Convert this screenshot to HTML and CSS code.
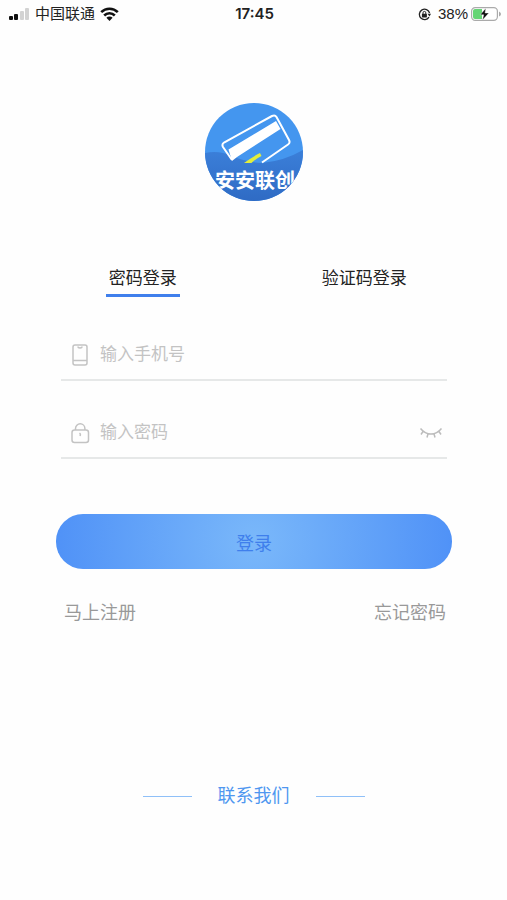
FILE: index.html
```html
<!DOCTYPE html>
<html lang="zh-CN">
<head>
<meta charset="utf-8">
<meta name="viewport" content="width=device-width, initial-scale=1">
<title>登录</title>
<link rel="stylesheet" href="styles.css">
</head>
<body>
<header class="status">
  <div class="status-side">
    <svg width="22" height="12" viewBox="0 0 22 12" aria-hidden="true">
      <rect x="1" y="8" width="4" height="4" rx="1" fill="#111"/>
      <rect x="6" y="6" width="4" height="6" rx="1" fill="#111"/>
      <rect x="12" y="3" width="4" height="9" rx="1" fill="#d2d2d2"/>
      <rect x="17" y="0" width="4" height="12" rx="1" fill="#d2d2d2"/>
    </svg>
    <span class="carrier">中国联通</span>
    <svg width="19" height="14" viewBox="0 0 19 14" aria-hidden="true">
      <g fill="none" stroke="#111" stroke-width="2.6">
        <path d="M1.2 5.2a11.8 11.8 0 0 1 16.6 0"/>
        <path d="M4.2 8.5a7.5 7.5 0 0 1 10.6 0"/>
      </g>
      <path d="M6.4 10.8a4.4 4.4 0 0 1 6.2 0L9.5 14z" fill="#111"/>
    </svg>
  </div>
  <time class="clock">17:45</time>
  <div class="status-side status-right">
    <svg width="13" height="13" viewBox="0 0 13 13" aria-hidden="true">
      <path d="M11.6 5A5.2 5.2 0 1 0 11 9.200" fill="none" stroke="#222" stroke-width="1.3"/>
      <path d="M9.600 5.800H13l-1.500 2.600z" fill="#222"/>
      <rect x="3.900" y="5.800" width="5" height="3.600" rx=".6" fill="#222"/>
      <path d="M5 6V4.800a1.400 1.400 0 0 1 2.800 0V6" fill="none" stroke="#222"/>
    </svg>
    <span class="percent">38%</span>
    <svg width="30" height="14" viewBox="0 0 30 14" aria-hidden="true">
      <rect x=".6" y=".6" width="25.8" height="12.8" rx="3.6" fill="#fff" stroke="#aaa" stroke-width="1.2"/>
      <path d="M4 2H11V12H4A2 2 0 0 1 2 10V4A2 2 0 0 1 4 2z" fill="#65d575"/>
      <path d="M28 4.500v5q2-1 2-2.500t-2-2.500z" fill="#aaa"/>
      <path d="M14.800 1.200 9.200 7.800h3.500l-1.200 5.200 6.400-7h-3.800z" fill="#111" stroke="#fff" stroke-width=".4"/>
    </svg>
  </div>
</header>

<main class="login">
  <svg class="logo" viewBox="0 0 98 98" role="img" aria-label="安安联创">
    <defs>
      <clipPath id="disc"><circle cx="49" cy="49" r="49"/></clipPath>
      <linearGradient id="wave" x1="0" y1="0" x2="0" y2="1">
        <stop offset="0" stop-color="#3b7fd9"/>
        <stop offset="1" stop-color="#2f6bc4"/>
      </linearGradient>
    </defs>
    <g clip-path="url(#disc)">
      <rect width="98" height="98" fill="#4496ef"/>
      <path d="M0 50q14-3 27 3t30 7q22-2 41-13v51H0z" fill="url(#wave)"/>
      <path d="M27 57 18 44q-1.500-3 1-4.500L67 13q3-1.500 4.500 1L84 37q1.500 3-1 4.500L57 59.500" fill="none" stroke="#fff" stroke-width="2"/>
      <path d="M23.500 46.500 71 18l4.500 8L32 54l-5 4z" fill="#fff"/>
      <path d="M39 60Q47 54 55 50l1.500 3q-6 3-10 7z" fill="#e2ee3c"/>
      <text class="logo-text" x="50" y="85" text-anchor="middle">安安联创</text>
    </g>
  </svg>

  <nav class="tabs">
    <button class="tab tab-active" type="button">密码登录</button>
    <button class="tab" type="button">验证码登录</button>
  </nav>

  <form class="form">
    <div class="field">
      <label for="phone" aria-label="手机号">
        <svg class="icon" width="20" height="22" viewBox="0 0 20 22">
          <rect x="3" y="1" width="14" height="20" rx="2"/>
          <path d="M3 16.500h14M8 2.500q0 1.500 2 1.500t2-1.500"/>
        </svg>
      </label>
      <input id="phone" type="tel" placeholder="输入手机号">
    </div>
    <div class="field">
      <label for="password" aria-label="密码">
        <svg class="icon" width="20" height="22" viewBox="0 0 20 22">
          <rect x="2" y="8" width="16.500" height="12.500" rx="2.500"/>
          <path d="M5.500 8V6.500a4.700 4.700 0 0 1 9.400 0V8M9.500 11q1.500 1 .5 3"/>
        </svg>
      </label>
      <input id="password" type="password" placeholder="输入密码">
      <button class="reveal" type="button" aria-label="显示密码">
        <svg width="24" height="12" viewBox="0 0 24 12" fill="none" stroke="#bcbcbc" stroke-width="1.500">
          <path d="M1.500 1.500Q6 7 12 7T22.500 1.500M4 4.500 2 7.500M9 6.800 8 10.500M15 6.800l1 3.700M20 4.500l2 3"/>
        </svg>
      </button>
    </div>
    <button class="submit" type="submit">登录</button>
  </form>

  <div class="links">
    <a href="#register">马上注册</a>
    <a href="#forgot">忘记密码</a>
  </div>
</main>

<footer class="contact">
  <a href="#contact">联系我们</a>
</footer>
</body>
</html>
```
FILE: styles.css
```css
* {
  box-sizing: border-box;
}

body {
  margin: 0;
  min-height: 100vh;
  display: flex;
  flex-direction: column;
  background: #fefefe;
  color: #222;
  font-family: "Liberation Sans", "Noto Sans CJK SC", sans-serif;
}

button,
input {
  border: 0;
  padding: 0;
  background: none;
  font: inherit;
  color: inherit;
}

a {
  color: inherit;
  text-decoration: none;
}

svg {
  display: block;
  flex: none;
}

.status {
  display: grid;
  grid-template-columns: 1fr auto 1fr;
  align-items: center;
  height: 28px;
  padding: 0 6px 0 8px;
  font-family: "Liberation Sans", "Noto Sans CJK SC", sans-serif;
  font-size: 15px;
  line-height: 20px;
}

.status-side {
  display: flex;
  align-items: center;
  gap: 5px;
}

.status-right {
  justify-content: flex-end;
  gap: 3px;
}

.percent {
  margin-left: 4px;
}

.clock {
  font-family: Inter, sans-serif;
  font-weight: 600;
}

.login {
  flex: 1;
  display: flex;
  flex-direction: column;
}

.logo {
  width: 98px;
  height: 98px;
  margin: 75px auto 0;
}

.logo-text {
  font: 700 20px "Noto Sans CJK SC", sans-serif;
  fill: #fff;
}

.tabs {
  display: grid;
  grid-template-columns: 1fr 1fr;
  justify-items: center;
  margin: 60px 32px 0;
}

.tab {
  height: 36px;
  padding: 2px 3px 0;
  border-bottom: 3px solid transparent;
  font-size: 17px;
  line-height: 30px;
}

.tab-active {
  border-color: #3f7fec;
}

.form {
  display: flex;
  flex-direction: column;
  margin: 32px 55px 0 56px;
}

.field {
  display: flex;
  align-items: center;
  gap: 10px;
  height: 52px;
  margin: 0 5px 26px;
  padding: 2px 4px 0 9px;
  border-bottom: 2px solid #e6e8e8;
}

.field input {
  flex: 1;
  min-width: 0;
  height: 30px;
  outline: 0;
  font-size: 17px;
}

.field input::placeholder {
  color: #c3c3c3;
  opacity: 1;
}

.icon {
  fill: none;
  stroke: #c3c3c3;
  stroke-width: 1.5;
}

.submit {
  height: 55px;
  margin-top: 29px;
  border-radius: 27px;
  background: radial-gradient(circle farthest-side at center, #7ab8fa, #5092f7);
  color: #3f7fec;
  font-size: 18px;
}

.links {
  display: flex;
  justify-content: space-between;
  margin: 29px 61px 0 64px;
  color: #999;
  font-size: 18px;
  line-height: 30px;
}

.contact {
  display: flex;
  align-items: center;
  justify-content: center;
  gap: 26px;
  margin-bottom: 89px;
  color: #4f97f0;
  font-size: 18px;
  line-height: 30px;
}

.contact::before,
.contact::after {
  content: "";
  width: 49px;
  height: 1px;
  background: #8fc0f8;
}
```
